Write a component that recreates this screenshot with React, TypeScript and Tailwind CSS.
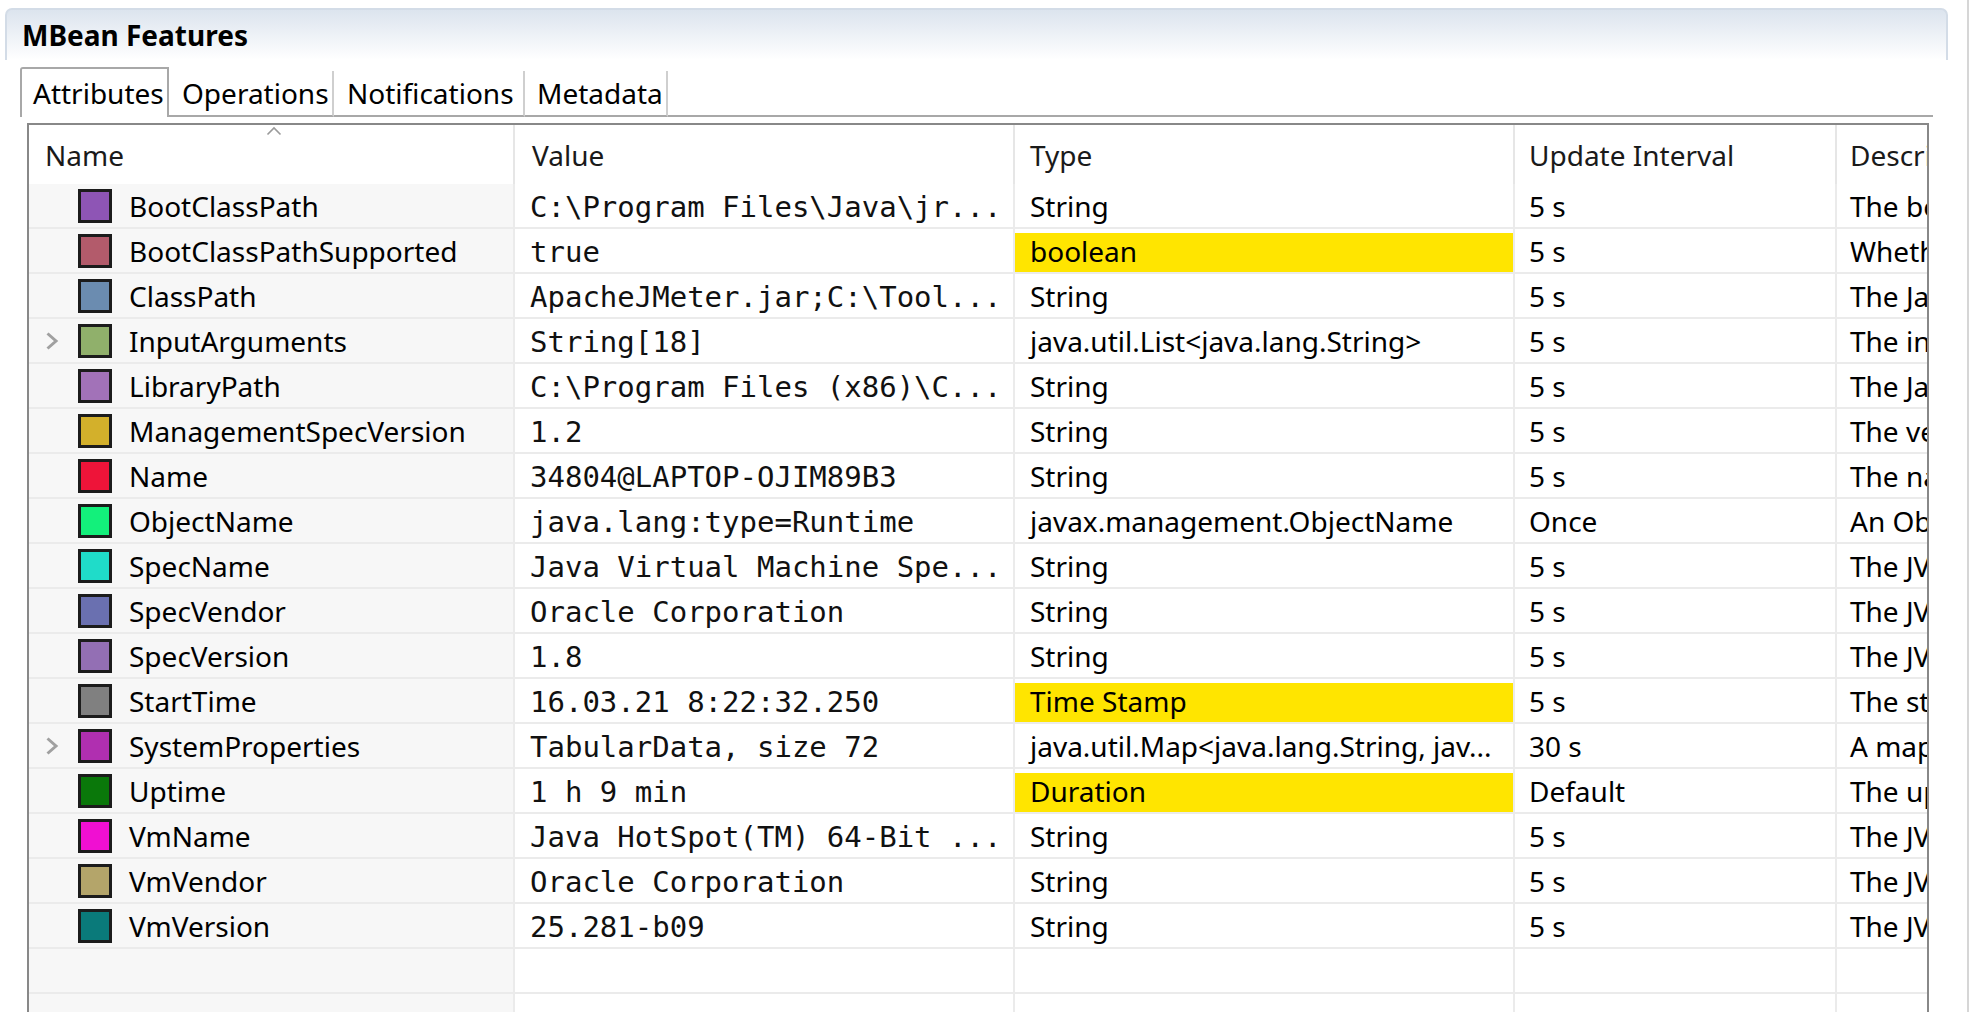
import React from "react";

type Attr = {
  name: string;
  color: string;
  value: string;
  type: string;
  update: string;
  desc: string;
  highlight?: boolean;
  expandable?: boolean;
};

const attributes: Attr[] = [
  { name: "BootClassPath", color: "bg-[#8e55b5]", value: "C:\\Program Files\\Java\\jr...", type: "String", update: "5 s", desc: "The boot class path used by the bootstrap class loader" },
  { name: "BootClassPathSupported", color: "bg-[#b35b6b]", value: "true", type: "boolean", update: "5 s", desc: "Whether the JVM supports the boot class path mechanism", highlight: true },
  { name: "ClassPath", color: "bg-[#6b8cb0]", value: "ApacheJMeter.jar;C:\\Tool...", type: "String", update: "5 s", desc: "The Java class path used by the system class loader" },
  { name: "InputArguments", color: "bg-[#90b06b]", value: "String[18]", type: "java.util.List<java.lang.String>", update: "5 s", desc: "The input arguments passed to the JVM", expandable: true },
  { name: "LibraryPath", color: "bg-[#a272b8]", value: "C:\\Program Files (x86)\\C...", type: "String", update: "5 s", desc: "The Java library path" },
  { name: "ManagementSpecVersion", color: "bg-[#d3b02b]", value: "1.2", type: "String", update: "5 s", desc: "The version of the management interface specification" },
  { name: "Name", color: "bg-[#ee1439]", value: "34804@LAPTOP-OJIM89B3", type: "String", update: "5 s", desc: "The name representing the running JVM" },
  { name: "ObjectName", color: "bg-[#13f07b]", value: "java.lang:type=Runtime", type: "javax.management.ObjectName", update: "Once", desc: "An ObjectName that identifies this MBean" },
  { name: "SpecName", color: "bg-[#1fdcc9]", value: "Java Virtual Machine Spe...", type: "String", update: "5 s", desc: "The JVM specification name" },
  { name: "SpecVendor", color: "bg-[#6a70b0]", value: "Oracle Corporation", type: "String", update: "5 s", desc: "The JVM specification vendor" },
  { name: "SpecVersion", color: "bg-[#936fb4]", value: "1.8", type: "String", update: "5 s", desc: "The JVM specification version" },
  { name: "StartTime", color: "bg-[#808080]", value: "16.03.21 8:22:32.250", type: "Time Stamp", update: "5 s", desc: "The start time of the JVM", highlight: true },
  { name: "SystemProperties", color: "bg-[#b02fb0]", value: "TabularData, size 72", type: "java.util.Map<java.lang.String, jav...", update: "30 s", desc: "A map of names and values of all system properties", expandable: true },
  { name: "Uptime", color: "bg-[#0a780a]", value: "1 h 9 min", type: "Duration", update: "Default", desc: "The uptime of the JVM", highlight: true },
  { name: "VmName", color: "bg-[#f00fd2]", value: "Java HotSpot(TM) 64-Bit ...", type: "String", update: "5 s", desc: "The JVM implementation name" },
  { name: "VmVendor", color: "bg-[#b4a56a]", value: "Oracle Corporation", type: "String", update: "5 s", desc: "The JVM implementation vendor" },
  { name: "VmVersion", color: "bg-[#0a7a7a]", value: "25.281-b09", type: "String", update: "5 s", desc: "The JVM implementation version" },
];

function Chevron() {
  return (
    <svg width="14" height="20" viewBox="0 0 14 20" className="shrink-0">
      <polyline points="2.5,2.5 11,10 2.5,17.5" fill="none" stroke="#a0a0a0" strokeWidth="3" />
    </svg>
  );
}

function HeaderRow() {
  return (
    <div className="flex h-[59px] shrink-0 text-[#1a1a1a]">
      <div className="relative flex w-[486px] items-center border-r-2 border-[#e6e6e6] pl-[16px]">
        Name
        <svg width="16" height="10" viewBox="0 0 16 10" className="absolute left-[237px] top-[1px]">
          <polyline points="1.5,8.5 8,2 14.5,8.5" fill="none" stroke="#9a9a9a" strokeWidth="1.6" />
        </svg>
      </div>
      <div className="flex w-[500px] items-center border-r-2 border-[#e6e6e6] pl-[17px]">Value</div>
      <div className="flex w-[500px] items-center border-r-2 border-[#e6e6e6] pl-[15px]">Type</div>
      <div className="flex w-[322px] items-center border-r-2 border-[#e6e6e6] pl-[14px]">Update Interval</div>
      <div className="flex min-w-0 flex-1 items-center overflow-hidden whitespace-nowrap pl-[13px]">Description</div>
    </div>
  );
}

function AttrRow({ attr }: { attr?: Attr }) {
  return (
    <div className="flex h-[45px] shrink-0 border-b-2 border-[#ebebeb]">
      <div className="flex w-[486px] items-center border-r-2 border-[#ebebeb] bg-[#f7f7f7] pl-[16px]">
        {attr && (
          <>
            <div className="flex w-[15px]">{attr.expandable && <Chevron />}</div>
            <div className={`ml-[18px] h-[34px] w-[34px] shrink-0 border-[3px] border-[#1c1c1c] ${attr.color}`} />
            <span className="ml-[17px] whitespace-nowrap">{attr.name}</span>
          </>
        )}
      </div>
      <div className="flex w-[500px] items-center overflow-hidden whitespace-nowrap border-r-2 border-[#ebebeb] pl-[15px] pt-[3px] font-['DejaVu_Sans_Mono',monospace] text-[29px] text-[#111111]">
        {attr?.value}
      </div>
      <div className={`flex w-[500px] border-r-2 border-[#ebebeb] ${attr?.highlight ? "pt-[4px]" : ""}`}>
        <div
          className={`flex h-full w-full items-center overflow-hidden whitespace-nowrap pl-[15px] ${
            attr?.highlight ? "bg-[#ffe500] pb-[3px]" : ""
          }`}
        >
          {attr?.type}
        </div>
      </div>
      <div className="flex w-[322px] items-center border-r-2 border-[#ebebeb] pl-[14px]">{attr?.update}</div>
      <div className="flex min-w-0 flex-1 items-center overflow-hidden whitespace-nowrap pl-[13px]">{attr?.desc}</div>
    </div>
  );
}

export default function App() {
  return (
    <div className="flex h-[1012px] w-[1972px] overflow-hidden bg-white font-['Noto_Sans',sans-serif] text-[28px] leading-none text-black">
      <div className="flex w-[1967px] shrink-0 flex-col">
        {/* Section title */}
        <div className="ml-[5px] mt-[8px] flex h-[52px] w-[1943px] shrink-0 items-center rounded-t-[7px] border-2 border-b-0 border-[#d3dce7] bg-linear-to-b from-[#dce4ee] to-white pl-[15px] font-bold">
          MBean Features
        </div>

        {/* Tabs */}
        <div className="ml-[20px] mt-[7px] flex h-[50px] w-[1913px] shrink-0 items-end">
          <div className="flex h-[50px] w-[149px] items-center rounded-tl-[3px] border-2 border-b-0 border-[#a8a8a8] pl-[11px]">
            Attributes
          </div>
          <div className="flex h-[46px] w-[165px] items-center border-b-2 border-r-2 border-b-[#a8a8a8] border-r-[#cfcfcf] pl-[13px]">
            Operations
          </div>
          <div className="flex h-[46px] w-[191px] items-center border-b-2 border-r-2 border-b-[#a8a8a8] border-r-[#cfcfcf] pl-[13px]">
            Notifications
          </div>
          <div className="flex h-[46px] w-[143px] items-center border-b-2 border-r-2 border-b-[#a8a8a8] border-r-[#cfcfcf] pl-[12px]">
            Metadata
          </div>
          <div className="h-[46px] flex-1 border-b-2 border-[#a8a8a8]" />
        </div>

        {/* Attributes table */}
        <div className="ml-[27px] mt-[6px] flex w-[1902px] shrink-0 flex-col border-2 border-[#888888]">
          <HeaderRow />
          {attributes.map((a) => (
            <AttrRow key={a.name} attr={a} />
          ))}
          <AttrRow />
          <AttrRow />
        </div>
      </div>
      <div className="w-[2px] shrink-0 bg-[#d6d6d6]" />
      <div className="flex-1" />
    </div>
  );
}
